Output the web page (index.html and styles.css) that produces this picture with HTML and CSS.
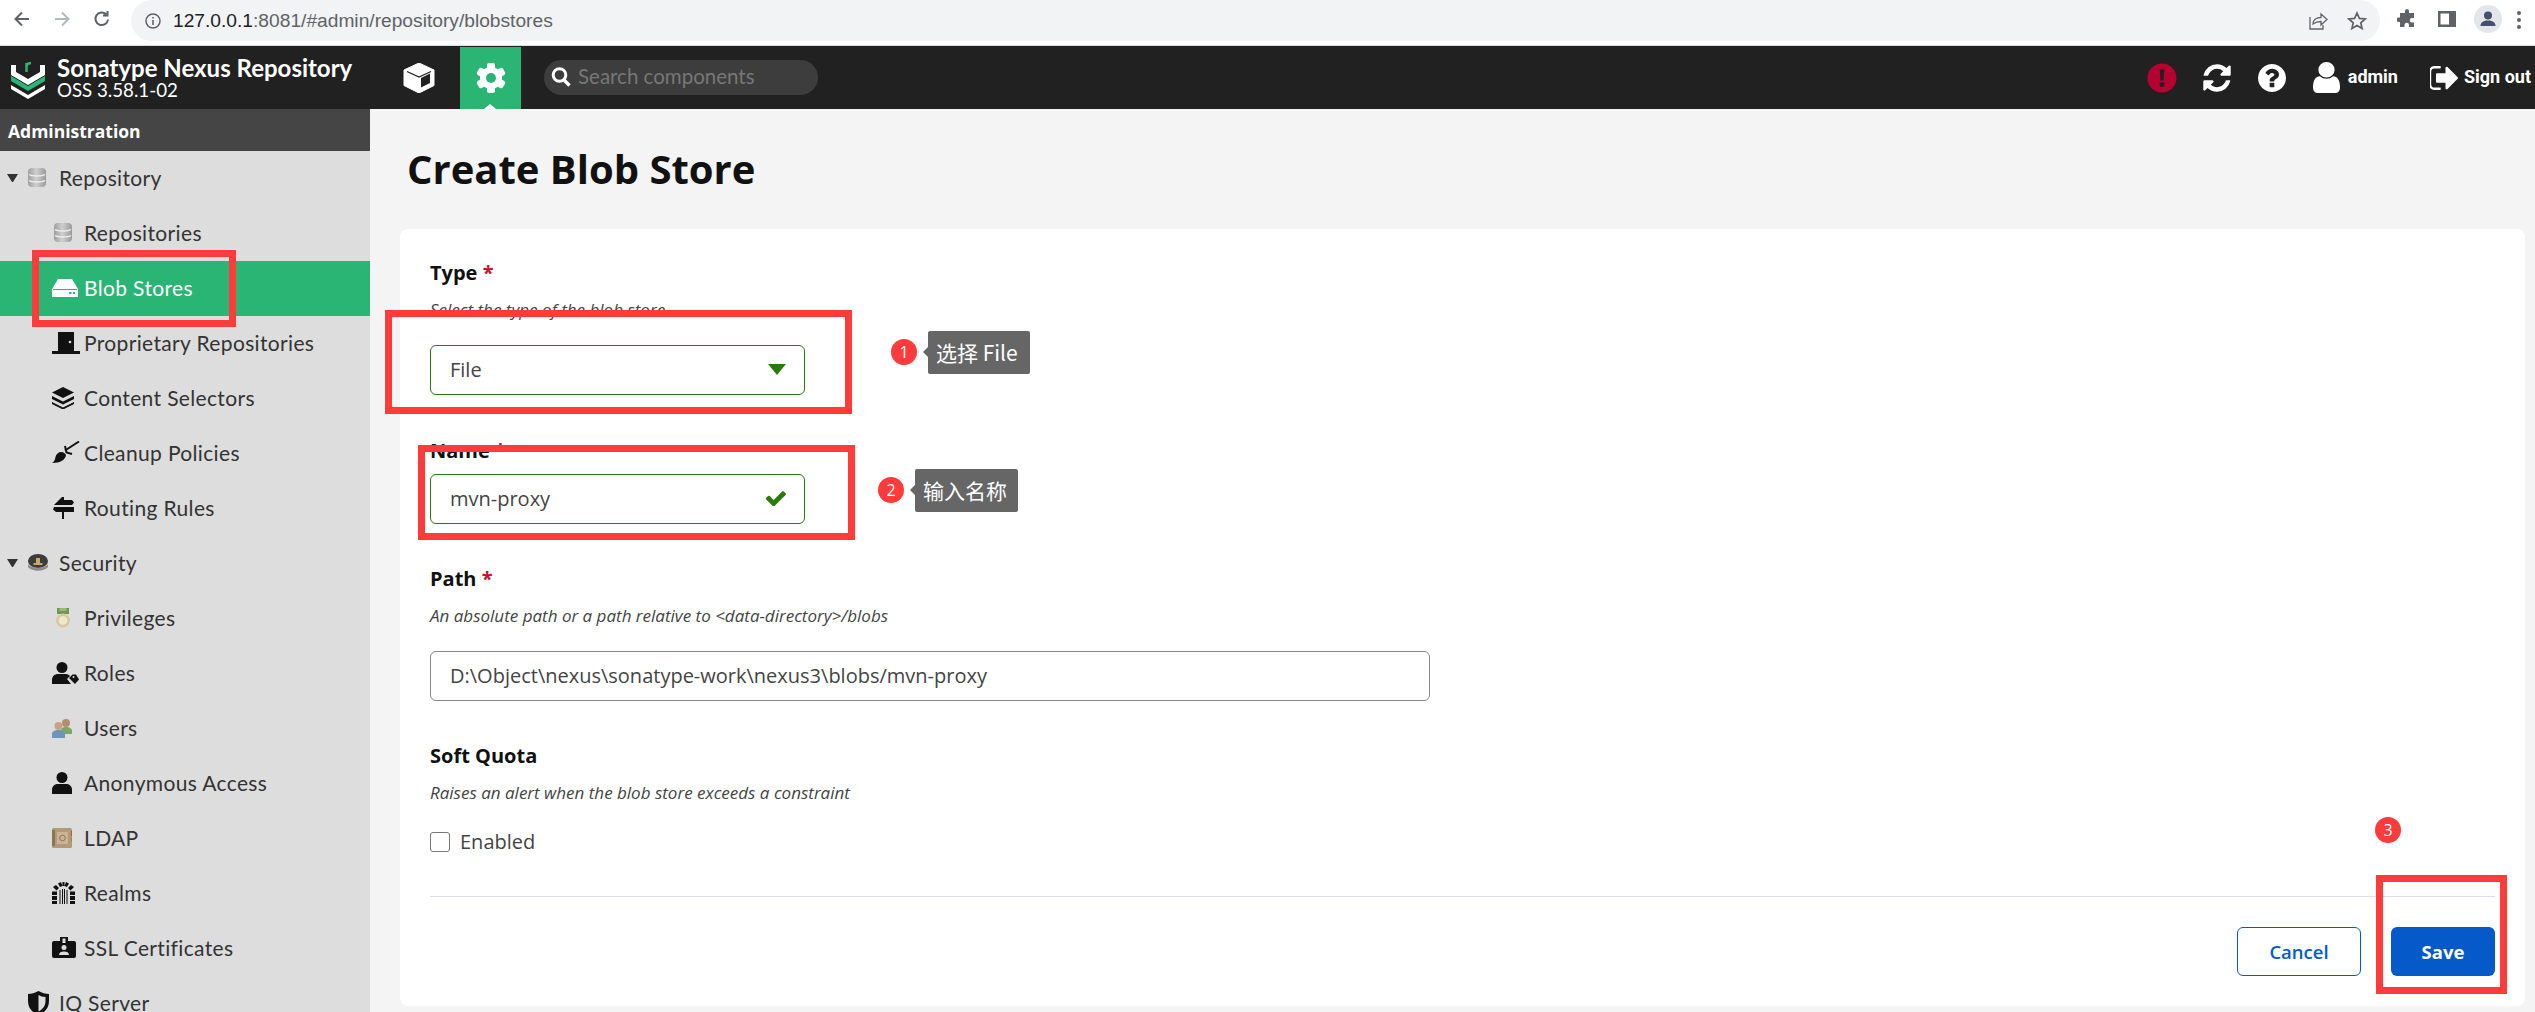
FILE: index.html
```html
<!DOCTYPE html>
<html lang="en">
<head>
<meta charset="utf-8">
<title>Create Blob Store</title>
<link rel="stylesheet" href="styles.css">
</head>
<body>
<header class="browser">
  <svg class="bi back" viewBox="0 0 20 20"><path d="M17 10H4M10 3.5 3.5 10l6.5 6.5" fill="none" stroke="#5f6368" stroke-width="2"/></svg>
  <svg class="bi fwd" viewBox="0 0 20 20"><path d="M3 10h13M10 3.5l6.500 6.500-6.500 6.500" fill="none" stroke="#b4b7bb" stroke-width="2"/></svg>
  <svg class="bi reload" viewBox="0 0 20 20"><path d="M16 10.500a6.300 6.300 0 1 1-1.800-5.200M15.500 2v4.500H11" fill="none" stroke="#5f6368" stroke-width="2"/></svg>
  <div class="omnibox">
    <svg class="info" viewBox="0 0 16 16"><circle cx="8" cy="8" r="7" fill="none" stroke="#5f6368" stroke-width="1.500"/><path d="M8 7v5M8 4v1.600" stroke="#5f6368" stroke-width="1.600"/></svg>
    <span class="url"><b>127.0.0.1</b>:8081/#admin/repository/blobstores</span>
    <span class="omni-right">
      <svg class="bi" viewBox="0 0 20 20"><path d="M2 6v12h13v-4M5 13c0-4 3-6.500 8-6.500V3l6 5.500-6 5.500v-3.500c-4 0-6 1-8 2.500z" fill="none" stroke="#5f6368" stroke-width="1.300"/></svg>
      <svg class="bi" viewBox="0 0 20 20"><path d="M10 2l2.400 5.400 5.800.600-4.400 3.900 1.300 5.700L10 14.600l-5.100 3 1.300-5.700L1.800 8l5.800-.600z" fill="none" stroke="#5f6368" stroke-width="1.700"/></svg>
    </span>
  </div>
  <svg class="bi ext" viewBox="0 0 20 20"><path d="M8 2a2 2 0 0 1 4 0v2h5v5h-2a2.200 2.200 0 0 0 0 4.500h2V18h-5v-2a2.200 2.200 0 0 0-4.500 0v2H3v-5H1.500a2.200 2.200 0 0 1 0-4.500H3V4h5z" fill="#5f6368"/></svg>
  <svg class="bi side" viewBox="0 0 20 20"><path d="M1 2h18v16H1zM3.500 4.500v11H12v-11z" fill="#5f6368" fill-rule="evenodd"/></svg>
  <span class="avatar"><svg viewBox="0 0 20 20"><circle cx="10" cy="6.500" r="4" fill="#45516b"/><path d="M2.500 17c0-4 3.500-5.500 7.500-5.500s7.500 1.500 7.500 5.500z" fill="#45516b"/></svg></span>
  <span class="dots"><i></i><i></i><i></i></span>
</header>

<nav class="topbar">
  <svg class="logo" viewBox="0 0 60 60"><path d="M11 17h5v7l12 7 12-7v-7h5v10L28 37 11 27z" fill="#fff"/><path d="M11 28l17 10 17-10v5L28 43 11 33z" fill="#2ab574"/><path d="M11 37l17 10 17-10v4L28 51 11 41z" fill="#fff"/><path d="M26.500 24v-9M26.500 17.500c1-2 3-2.500 4.500-2.500" fill="none" stroke="#2ab574" stroke-width="2.500"/></svg>
  <div class="brand"><div class="brand-name">Sonatype Nexus Repository</div><div class="brand-ver">OSS 3.58.1-02</div></div>
  <svg class="cube" viewBox="0 0 32 30"><path d="M16 0l15 7v15.500L16 30 1 22.500V7z" fill="#fff" stroke="#fff" stroke-linejoin="round"/><path d="M18 15l9-4.500V20l-9 4.500z" fill="#212121"/><path d="M4 8.500L16 14l12-5.500" fill="none" stroke="#212121" stroke-width="1.200"/></svg>
  <div class="tab-active">
    <svg class="gear" viewBox="-15 -15 30 30"><g fill="#fff"><circle r="11"/><rect x="-4" y="-15" width="8" height="30" rx="2"/><rect x="-4" y="-15" width="8" height="30" rx="2" transform="rotate(60)"/><rect x="-4" y="-15" width="8" height="30" rx="2" transform="rotate(120)"/></g><circle r="5" fill="#2ab574"/></svg>
  </div>
  <div class="search">
    <svg class="glass" viewBox="0 0 20 20"><circle cx="8.500" cy="8" r="6.300" fill="none" stroke="#fff" stroke-width="3"/><path d="M13 13l5.500 5.500" stroke="#fff" stroke-width="3.400"/></svg>
    <span>Search components</span>
  </div>
  <div class="nav-right">
    <svg class="ni alert" viewBox="0 0 30 30"><circle cx="15" cy="15" r="14.500" fill="#b50030"/><path d="M12.700 6.500h4.600l-.800 11h-3z" fill="#212121"/><circle cx="15" cy="21.500" r="2.500" fill="#212121"/></svg>
    <svg class="ni refresh" viewBox="0 0 1792 1792"><path fill="#fff" d="M1639 1056q0 5-1 7-64 268-268 434.500t-478 166.500q-146 0-282.500-55t-243.500-157l-129 129q-19 19-45 19t-45-19-19-45v-448q0-26 19-45t45-19h448q26 0 45 19t19 45-19 45l-137 137q71 66 161 102t187 36q134 0 250-65t186-179q11-17 53-117 8-23 30-23h192q13 0 22.500 9.500t9.500 22.500zm25-800v448q0 26-19 45t-45 19h-448q-26 0-45-19t-19-45 19-45l138-138q-148-137-349-137-134 0-250 65t-186 179q-11 17-53 117-8 23-30 23h-199q-13 0-22.500-9.500t-9.500-22.500v-7q65-268 270-434.500t480-166.500q146 0 284 55.500t245 156.500l130-129q19-19 45-19t45 19 19 45z"/></svg>
    <svg class="ni help" viewBox="128 128 1536 1536"><path fill="#fff" d="M1024 1376v-192q0-14-9-23t-23-9h-192q-14 0-23 9t-9 23v192q0 14 9 23t23 9h192q14 0 23-9t9-23zm256-672q0-88-55.500-163t-138.500-116-170-41q-243 0-371 213-15 24 8 42l132 100q7 6 19 6 16 0 25-12 53-68 86-92 34-24 86-24 48 0 85.500 26t37.500 59q0 38-20 61t-68 45q-63 28-115.500 86.500t-52.500 125.500v36q0 14 9 23t23 9h192q14 0 23-9t9-23q0-19 21.500-49.500t54.500-49.500q32-18 49-28.500t46-35 44.500-48 28-60.500 12.500-81zm384 192q0 209-103 385.500t-279.500 279.500-385.500 103-385.500-103-279.500-279.500-103-385.500 103-385.500 279.500-279.500 385.500-103 385.500 103 279.500 279.500 103 385.500z"/></svg>
    <svg class="ni user" viewBox="256 128 1280 1536" preserveAspectRatio="none"><path fill="#fff" d="M1536 1399q0 109-62.500 187t-150.500 78h-854q-88 0-150.500-78t-62.500-187q0-85 8.500-160.500t31.500-152 58.500-131 94-89 134.500-34.500q131 128 313 128t313-128q76 0 134.500 34.500t94 89 58.500 131 31.500 152 8.500 160.500zm-256-887q0 159-112.500 271.500t-271.500 112.500-271.500-112.500-112.500-271.500 112.500-271.500 271.500-112.500 271.500 112.500 112.500 271.500z"/></svg>
    <span class="nav-text admin">admin</span>
    <svg class="ni signout" viewBox="128 256 1504 1280"><path fill="#fff" d="M704 1440q0 4 1 20t.5 26.500-3 23.500-10 19.500-20.500 6.500h-320q-119 0-203.500-84.500t-84.500-203.500v-704q0-119 84.500-203.500t203.500-84.500h320q13 0 22.500 9.500t9.500 22.500q0 4 1 20t.5 26.500-3 23.500-10 19.500-20.500 6.500h-320q-66 0-113 47t-47 113v704q0 66 47 113t113 47h312l11.500 1 11.500 3 8 5.500 7 9 2 13.500zm928-544q0 26-19 45l-544 544q-19 19-45 19t-45-19-19-45v-288h-448q-26 0-45-19t-19-45v-384q0-26 19-45t45-19h448v-288q0-26 19-45t45-19 45 19l544 544q19 19 19 45z"/></svg>
    <span class="nav-text">Sign out</span>
  </div>
</nav>

<div class="shell">
  <aside class="sidebar">
    <div class="side-head">Administration</div>
    <div class="row top"><i class="caret"></i><span class="slot"><svg class="ic db" viewBox="0 0 18 19"><use href="#db"/></svg></span>Repository</div>
    <div class="row"><span class="slot"><svg class="ic db" viewBox="0 0 18 19"><use href="#db"/></svg></span>Repositories</div>
    <div class="row active"><span class="slot"><svg class="ic" viewBox="0 0 26 18"><path d="M6 0h14l6 10v8H0v-8z" fill="#fff"/><path d="M1 10.500h24" stroke="#2ab574" stroke-width="1"/><path d="M17 13h2.500v2H17zM21 13h2v2h-2z" fill="#2ab574"/></svg></span>Blob Stores</div>
    <div class="row"><span class="slot"><svg class="ic" viewBox="0 0 28 22"><path d="M6 0h16v19h6v3H0v-3h6z" fill="#111"/><circle cx="18" cy="10" r="1.300" fill="#ddd"/></svg></span>Proprietary Repositories</div>
    <div class="row"><span class="slot"><svg class="ic" viewBox="0 0 22 22"><path d="M11 0l11 5.500L11 11 0 5.500z" fill="#111"/><path d="M0 9l11 5.500L22 9v3L11 17.500 0 12z" fill="#111"/><path d="M0 15.500L11 21l11-5.500v1L11 22 0 16.500z" fill="#111" stroke="#111"/></svg></span>Content Selectors</div>
    <div class="row"><span class="slot"><svg class="ic" viewBox="0 0 28 23"><path d="M0 22c2-1 3-3 3.500-6 .5-3 3-5 6-5 2 0 4 1.500 4.500 3.500-1 4-5 7.500-14 7.500z" fill="#111"/><path d="M13 9.500l14-9" stroke="#111" stroke-width="2"/><path d="M13 5l1.500 6.500L20 13" fill="none" stroke="#111" stroke-width="2"/></svg></span>Cleanup Policies</div>
    <div class="row"><span class="slot"><svg class="ic" viewBox="0 0 22 22"><path d="M10 0h2v3h8l2 2.500L20 8H2zM2 10h20v5H4l-3-2.500z" fill="#111"/><path d="M10 15h2v7h-2z" fill="#111"/></svg></span>Routing Rules</div>
    <div class="row top"><i class="caret"></i><span class="slot"><svg class="ic" viewBox="0 0 20 17"><ellipse cx="10" cy="7" rx="10" ry="7" fill="#3c3c3c"/><path d="M0 10c3 5 17 5 20 0v3c-4 5-16 5-20 0z" fill="#8c8c82"/><path d="M8 4h4v6H8zM5.500 9h9v2h-9z" fill="#c7a86a"/></svg></span>Security</div>
    <div class="row"><span class="slot slot-c"><svg class="ic" viewBox="0 0 14 20"><path d="M1 0h12v6H1z" fill="#6d9a4c"/><path d="M3.500 0h7v3h-7z" fill="#9ab87a"/><circle cx="7" cy="12.500" r="7" fill="#d8caa0"/><circle cx="7" cy="12.500" r="4.300" fill="#f0e8c8"/></svg></span>Privileges</div>
    <div class="row"><span class="slot"><svg class="ic" viewBox="0 0 27 22"><circle cx="10" cy="5.500" r="5.500" fill="#111"/><path d="M0 22v-4c0-4 3-6 6-6h8c2 0 3 1 4 2l-3 3 4 5z" fill="#111"/><path d="M17 16l3.500-3.500H24l3 5-4 4.500z" fill="#111"/><circle cx="21.500" cy="15" r="1" fill="#ddd"/></svg></span>Roles</div>
    <div class="row"><span class="slot"><svg class="ic" viewBox="0 0 20 20"><circle cx="14" cy="5" r="4" fill="#b58d6c"/><path d="M9 13c0-3 2-4 5-4s6 1 6 4v3H9z" fill="#7da765"/><circle cx="6.500" cy="8" r="4" fill="#caa184"/><path d="M0 20v-4c0-3 3-4 6.500-4s6.500 1 6.500 4v4z" fill="#6d95bb"/></svg></span>Users</div>
    <div class="row"><span class="slot"><svg class="ic" viewBox="0 0 20 22"><circle cx="10" cy="5.500" r="5.500" fill="#111"/><path d="M0 22v-4.500C0 14 3 12 6 12h8c3 0 6 2 6 5.500V22z" fill="#111"/></svg></span>Anonymous Access</div>
    <div class="row"><span class="slot"><svg class="ic" viewBox="0 0 20 20"><rect width="20" height="20" rx="1.500" fill="#b29a78"/><path d="M0 2h3v16H0z" fill="#8a7658"/><path d="M19 3h1v5h-1z" fill="#b0584a"/><path d="M19 9h1v5h-1z" fill="#7f9a58"/><rect x="5" y="4" width="11" height="12" fill="#c9b596"/><circle cx="10.500" cy="10" r="2.800" fill="none" stroke="#8a7658"/></svg></span>LDAP</div>
    <div class="row"><span class="slot"><svg class="ic" viewBox="0 0 23 22"><path d="M0 19h5v3H0zM0 14h5v4H0zM0 9.500h5v3.500H0zM18 19h5v3h-5zM18 14h5v4h-5zM18 9.500h5v3.500h-5zM1 5l3-2 3 3-2.500 2.500zM22 5l-3-2-3 3 2.500 2.500zM6 1.500 9 0l1.500 4-2.500 1zM17 1.500 14 0l-1.500 4 2.500 1zM10.500 0h2v4h-2z" fill="#111"/><path d="M8 8v14M10.500 7v15M12.500 7v15M15 8v14" stroke="#111" stroke-width="1"/></svg></span>Realms</div>
    <div class="row"><span class="slot"><svg class="ic" viewBox="0 0 24 21"><path d="M2 4h6V0h8v4h6a2 2 0 0 1 2 2v13a2 2 0 0 1-2 2H2a2 2 0 0 1-2-2V6a2 2 0 0 1 2-2z" fill="#111"/><path d="M10.500 1.500h3V6h-3z" fill="#ddd"/><circle cx="12" cy="10.500" r="2.500" fill="#ddd"/><path d="M7 18c0-2.500 2-3.500 5-3.500s5 1 5 3.500z" fill="#ddd"/></svg></span>SSL Certificates</div>
    <div class="row top"><i class="caret blank"></i><span class="slot"><svg class="ic" viewBox="0 0 21 24"><path d="M10.500 0C7 2 3.500 3 0 3v7c0 7 4 11.500 10.500 14C17 21.500 21 17 21 10V3c-3.500 0-7-1-10.500-3zm0 4c2 1 4 2 7 2v4c0 5-3 8.500-7 10.500z" fill="#111" fill-rule="evenodd"/></svg></span>IQ Server</div>
  </aside>

  <main class="content">
    <h1 class="title">Create Blob Store</h1>
    <section class="card">
      <div class="label">Type <em>*</em></div>
      <div class="hint">Select the type of the blob store</div>
      <div class="field ok short"><span>File</span><i class="drop"></i></div>

      <div class="label gap tight">Name <em>*</em></div>
      <div class="field ok short"><span>mvn-proxy</span><svg class="check" viewBox="128 256 1543 1232"><path fill="#2b7a0b" d="M1671 566q0 40-28 68l-724 724-136 136q-28 28-68 28t-68-28l-136-136-362-362q-28-28-28-68t28-68l136-136q28-28 68-28t68 28l294 295 656-657q28-28 68-28t68 28l136 136q28 28 28 68z"/></svg></div>

      <div class="label gap">Path <em>*</em></div>
      <div class="hint">An absolute path or a path relative to &lt;data-directory&gt;/blobs</div>
      <div class="field wide"><span>D:\Object\nexus\sonatype-work\nexus3\blobs/mvn-proxy</span></div>

      <div class="label gap">Soft Quota</div>
      <div class="hint">Raises an alert when the blob store exceeds a constraint</div>
      <label class="checkline"><i class="box"></i>Enabled</label>

      <div class="actions">
        <button class="btn cancel">Cancel</button>
        <button class="btn save">Save</button>
      </div>
    </section>
  </main>
</div>

<div class="redbox rb-blob"></div>
<div class="redbox rb-type"></div>
<div class="redbox rb-name"></div>
<div class="redbox rb-save"></div>
<div class="badge b1">1</div>
<div class="tip t1">选择 File</div>
<div class="badge b2">2</div>
<div class="tip t2">输入名称</div>
<div class="badge b3">3</div>

<svg class="defs"><defs>
  <linearGradient id="dbg" x1="0" x2="1" y1="0" y2="0"><stop offset="0" stop-color="#9d9d9d"/><stop offset=".45" stop-color="#cfcfcf"/><stop offset="1" stop-color="#9a9a9a"/></linearGradient>
  <symbol id="db" viewBox="0 0 18 19"><rect width="18" height="19" rx="4" fill="url(#dbg)"/><path d="M1 6.500c3 2 13 2 16 0M1 12.500c3 2 13 2 16 0" fill="none" stroke="#eeeeee" stroke-width="1.400"/></symbol>
</defs></svg>
</body>
</html>
```
FILE: styles.css
```css
* { box-sizing: border-box; }
html, body { margin: 0; height: 1012px; overflow: hidden; }
body { position: relative; width: 2535px; font-family: "Open Sans", sans-serif; background: #f4f4f4; color: #111; }

.browser { height: 46px; background: #fff; border-bottom: 1px solid #dadce0; display: flex; align-items: flex-start; }
.bi { width: 20px; height: 20px; flex: none; margin-top: 9px; }
.back { margin-left: 12px; }
.fwd { margin-left: 20px; }
.reload { margin-left: 20px; }
.omnibox { width: 2249px; height: 41px; margin-left: 19px; background: #f1f3f4; border-radius: 21px; display: flex; align-items: center; padding: 0 13px 0 14px; }
.omnibox .bi { margin-top: 0; }
.info { width: 16px; height: 16px; flex: none; }
.url { margin-left: 12px; font: 19.200px "Liberation Sans", sans-serif; color: #5f6368; }
.url b { font-weight: 400; color: #202124; }
.omni-right { margin-left: auto; display: flex; gap: 19px; }
.ext { margin-left: 17px; }
.side { margin-left: 20px; }
.avatar { width: 28px; height: 28px; margin: 5px 0 0 17px; border-radius: 50%; background: #e3e6ea; display: flex; align-items: center; justify-content: center; flex: none; }
.avatar svg { width: 20px; height: 20px; }
.dots { margin: 11px 0 0 15px; display: flex; flex-direction: column; gap: 3px; }
.dots i { width: 4px; height: 4px; border-radius: 50%; background: #5f6368; }

.topbar { height: 63px; background: #212121; display: flex; align-items: center; color: #fff; }
.logo { width: 60px; height: 60px; margin: 0 -3px 0 0; flex: none; }
.brand { width: 349px; padding-bottom: 1px; }
.brand-name { font: 700 24px/25px Lato, sans-serif; }
.brand-ver { font: 400 18.700px/20px Lato, sans-serif; }
.cube { width: 32px; height: 30px; flex: none; margin-left: -3px; }
.tab-active { width: 61px; height: 62px; margin: 1px 0 0 25px; background: #2ab574; display: flex; align-items: center; justify-content: center; position: relative; flex: none; }
.tab-active::after { content: ""; position: absolute; left: 24px; bottom: 0; border: 6px solid transparent; border-top: 0; border-bottom: 5px solid #fff; }
.gear { width: 30px; height: 30px; }
.search { width: 274px; height: 35px; margin: 0 0 1px 23px; border-radius: 18px; background: #3d3d3d; display: flex; align-items: center; padding-left: 7px; color: #777; font: 400 20.500px Lato, sans-serif; }
.search span { margin-bottom: 2px; }
.glass { width: 20px; height: 20px; margin-right: 7px; }
.nav-right { margin-left: auto; display: flex; align-items: center; }
.ni { flex: none; }
.alert { width: 30px; height: 30px; }
.refresh { width: 32px; height: 32px; margin-left: 24px; }
.help { width: 28px; height: 28px; margin-left: 25px; }
.user { width: 27px; height: 31px; margin-left: 27px; }
.nav-text { font: 700 18px Roboto, sans-serif; margin-bottom: 2px; }
.admin { margin-left: 8px; }
.signout { width: 28px; height: 24px; margin: 0 6px 0 32px; }
.nav-text:last-child { margin-right: 4px; }

.shell { display: flex; height: 903px; }
.sidebar { width: 370px; flex: none; background: #ddd; overflow: hidden; }
.side-head { height: 42px; background: #454545; color: #fff; font: 700 17.500px/44px "Open Sans", sans-serif; padding-left: 8px; }
.row { height: 55px; display: flex; align-items: center; padding: 0 0 2px 52px; font: 400 21px Lato, sans-serif; letter-spacing: .35px; color: #333; }
.row.top { padding-left: 7px; }
.row.active { background: #2ab574; color: #fff; }
.caret { width: 11px; height: 8px; margin-right: 10px; border-left: 5.500px solid transparent; border-right: 5.500px solid transparent; border-top: 8px solid #333; }
.caret.blank { border-top-color: transparent; }
.slot { width: 32px; flex: none; display: flex; align-items: center; }
.top .slot { width: 31px; }
.slot-c { padding-left: 4px; }
.ic { display: block; }
.db { width: 18px; height: 19px; }
.row:nth-child(3) .slot .db { margin-left: 2px; }
.row:nth-child(4) .ic { width: 26px; height: 18px; }
.row:nth-child(5) .ic { width: 28px; height: 22px; }
.row:nth-child(6) .ic { width: 22px; height: 22px; }
.row:nth-child(7) .ic { width: 28px; height: 23px; }
.row:nth-child(8) .ic { width: 22px; height: 22px; }
.row:nth-child(9) .ic { width: 20px; height: 17px; }
.row:nth-child(10) .ic { width: 14px; height: 20px; }
.row:nth-child(11) .ic { width: 27px; height: 22px; }
.row:nth-child(12) .ic { width: 20px; height: 20px; }
.row:nth-child(13) .ic { width: 20px; height: 22px; }
.row:nth-child(14) .ic { width: 20px; height: 20px; }
.row:nth-child(15) .ic { width: 23px; height: 22px; }
.row:nth-child(16) .ic { width: 24px; height: 21px; }
.row:nth-child(17) .ic { width: 21px; height: 24px; }

.content { flex: 1; min-width: 0; padding: 35px 10px 6px 30px; display: flex; flex-direction: column; }
.title { margin: 0 0 35px; padding-left: 7px; font: 700 40px/50px "Open Sans", sans-serif; color: #111; }
.card { flex: 1; background: #fff; border-radius: 8px; padding: 32px 30px 30px; display: flex; flex-direction: column; }
.label { font: 700 20px/24px "Open Sans", sans-serif; color: #111; }
.label em { color: #c8102e; font-style: normal; }
.label.gap { margin-top: 43px; }
.label.tight { margin-top: 44px; margin-bottom: 11px; }
.hint { margin: 14px 0 24px; font: italic 400 17px/22px "Open Sans", sans-serif; color: #444; }
.field { height: 50px; border: 1px solid #888; border-radius: 6px; display: flex; align-items: center; justify-content: space-between; padding: 0 18px 2px 19px; font: 400 20px "Open Sans", sans-serif; color: #444; flex: none; }
.short { width: 375px; }
.wide { width: 1000px; }
.ok { border-color: #2b7a0b; }
.drop { border-left: 9px solid transparent; border-right: 9px solid transparent; border-top: 11px solid #2b7a0b; }
.check { width: 20px; height: 16px; }
.checkline { display: flex; align-items: center; gap: 10px; margin-top: 4px; font: 400 20px/20px "Open Sans", sans-serif; color: #444; }
.box { width: 20px; height: 20px; border: 1px solid #777; border-radius: 3px; }
.actions { margin-top: 44px; padding-top: 30px; border-top: 1px solid #dcdcf0; display: flex; justify-content: flex-end; gap: 30px; }
.btn { height: 49px; border-radius: 6px; font: 600 18.500px "Open Sans", sans-serif; }
.cancel { width: 124px; background: #fff; border: 1px solid #0659c8; color: #0659c8; }
.save { width: 104px; background: #0659c8; border: 0; color: #fff; font-weight: 700; }

.redbox { position: absolute; border: 7px solid #ff3b3b; }
.rb-blob { left: 32px; top: 250px; width: 204px; height: 77px; }
.rb-type { left: 385px; top: 310px; width: 467px; height: 104px; }
.rb-name { left: 418px; top: 445px; width: 437px; height: 95px; }
.rb-save { left: 2376px; top: 875px; width: 131px; height: 119px; }
.badge { position: absolute; width: 26px; height: 26px; border-radius: 50%; background: #ff3b3b; color: #fff; font: 400 16px/26px "Open Sans", sans-serif; text-align: center; }
.b1 { left: 891px; top: 339px; }
.b2 { left: 878px; top: 477px; }
.b3 { left: 2375px; top: 817px; }
.tip { position: absolute; height: 43px; background: #666; color: #fff; border-radius: 2px; font: 400 21px/43px "Noto Sans CJK SC", "Open Sans", sans-serif; padding-left: 8px; }
.tip::before { content: ""; position: absolute; left: -5px; top: 16px; border: 5px solid transparent; border-left: 0; border-right-color: #666; }
.t1 { left: 928px; top: 331px; width: 102px; }
.t2 { left: 915px; top: 469px; width: 103px; }
.defs { position: absolute; width: 0; height: 0; }
```
